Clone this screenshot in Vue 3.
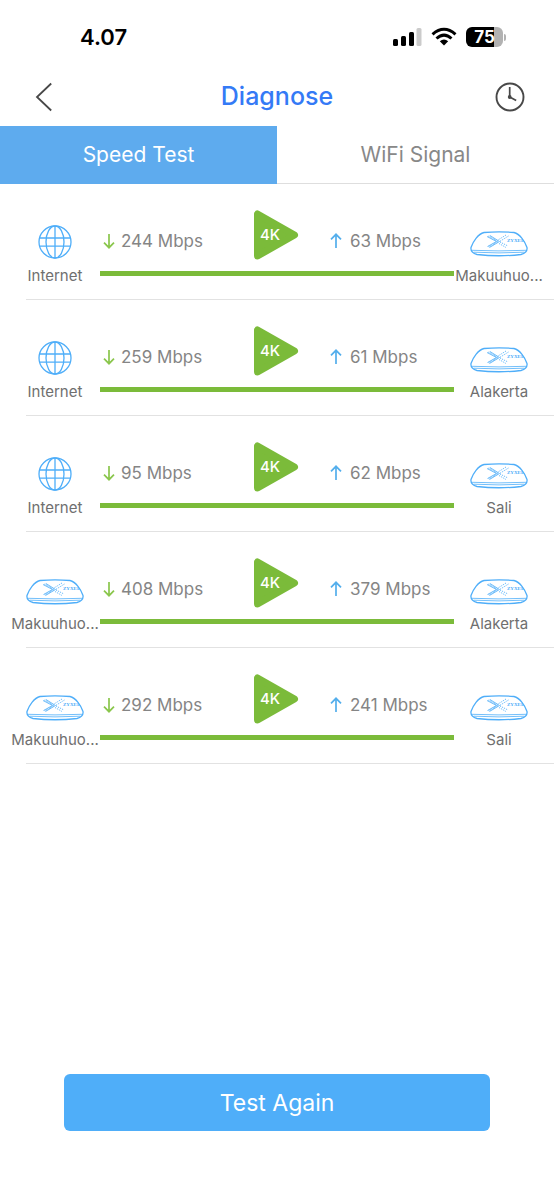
<script setup>
import { ref } from 'vue'

const tabs = ['Speed Test', 'WiFi Signal']
const active = ref('Speed Test')

const rows = [
  { from: 'Internet', to: 'Makuuhuo...', down: 244, up: 63 },
  { from: 'Internet', to: 'Alakerta', down: 259, up: 61 },
  { from: 'Internet', to: 'Sali', down: 95, up: 62 },
  { from: 'Makuuhuo...', to: 'Alakerta', down: 408, up: 379 },
  { from: 'Makuuhuo...', to: 'Sali', down: 292, up: 241 }
]
</script>

<template>
  <div class="screen">
    <svg class="defs" width="0" height="0" aria-hidden="true">
      <symbol id="globe" viewBox="0 0 34 34">
        <g fill="none" stroke="#4faef9" stroke-width="1.3">
          <circle cx="17" cy="17" r="16" />
          <ellipse cx="17" cy="17" rx="9" ry="16" />
          <path d="M17 1v32M1.600 13h30.800M1.600 21.200h30.800" />
        </g>
      </symbol>
      <symbol id="router" viewBox="0 0 58 26">
        <g fill="none" stroke="#4faef9">
          <path stroke-width="1.3" d="M14 1.500Q29 .3 44 1.500C50 3 55 10.500 57 16.500C57.500 20 55 22.500 51 23.500Q29 26 7 23.500C3 22.500.5 20 1 16.500C3 10.500 8 3 14 1.500Z" />
          <path stroke-width=".8" d="M2 19.300Q29 20.500 56 19.300M3.500 21.200Q29 22.600 54.500 21.200" />
          <path stroke-width=".8" d="M17 5.500L26.500 10.500L17.500 15.500M20 4.500L29.500 10.500L19.500 16.500" />
          <path stroke-width="1.500" stroke-dasharray="1 .6" stroke-opacity=".7" d="M18.500 5L28 10.500L18.500 16" />
          <path stroke-width="1" stroke-dasharray="1.200 1" stroke-opacity=".85" d="M36 4L28 9M38.500 5L30 10.300M30 11L38 15M29 12.500L36 16.500" />
        </g>
      </symbol>
    </svg>

    <header class="status">
      <span class="time">4.07</span>
      <div class="indicators">
        <svg width="30" height="20" viewBox="0 0 30 20" aria-hidden="true">
          <rect x="1" y="12" width="5" height="7" rx="1.500" />
          <rect x="9" y="9" width="5" height="10" rx="1.500" />
          <rect x="17" y="5" width="5" height="14" rx="1.500" />
          <rect x="24.500" y="1" width="5" height="18" rx="1.500" fill="#cbcbcb" />
        </svg>
        <svg width="26" height="20" viewBox="0 0 26 20" aria-hidden="true">
          <g fill="none" stroke="#000" stroke-width="3">
            <path d="M1.500 7.300Q13-2.700 24.500 7.300" />
            <path d="M5.500 11.500Q13 4.800 20.500 11.500" />
          </g>
          <path d="M8.800 14.300Q13 10.900 17.200 14.300L13 18.600Z" />
        </svg>
        <div class="battery">
          <span class="cell">75</span>
          <span class="nub"></span>
        </div>
      </div>
    </header>

    <nav class="bar">
      <button class="icon-button" aria-label="Back">
        <svg width="18" height="30" viewBox="0 0 18 30">
          <path d="M16.200 1.500L2 15l14.200 13.500" fill="none" stroke="#484848" stroke-width="1.800" />
        </svg>
      </button>
      <h1>Diagnose</h1>
      <button class="icon-button" aria-label="History">
        <svg width="30" height="30" viewBox="0 0 30 30">
          <circle cx="15" cy="15" r="13.500" fill="none" stroke="#484848" stroke-width="1.900" />
          <path d="M14.700 5v10l6.500 3.500" fill="none" stroke="#484848" stroke-width="1.700" />
          <circle cx="14.700" cy="15" r="1.900" fill="#484848" />
        </svg>
      </button>
    </nav>

    <div class="tabs" role="tablist">
      <button
        v-for="tab in tabs"
        :key="tab"
        role="tab"
        class="tab"
        :class="{ active: tab === active }"
        :aria-selected="tab === active"
        @click="active = tab"
      >{{ tab }}</button>
    </div>

    <main>
      <ul class="results">
        <li v-for="(row, i) in rows" :key="i" class="result">
          <div class="node">
            <svg v-if="row.from === 'Internet'" class="globe" aria-hidden="true"><use href="#globe" /></svg>
            <svg v-else class="router" viewBox="0 0 58 26" aria-hidden="true">
              <use href="#router" />
              <text x="37" y="11" class="brand">ZYXEL</text>
            </svg>
            <span class="name">{{ row.from }}</span>
          </div>
          <div class="link">
            <div class="speeds">
              <span class="speed down">
                <svg width="12" height="16" viewBox="0 0 12 16" aria-hidden="true">
                  <path d="M6 1v13.500M1 9.700l5 5 5-5" fill="none" stroke="#8ac64c" stroke-width="1.700" />
                </svg>
                {{ row.down }} Mbps
              </span>
              <span class="quality">
                <svg width="46" height="50" viewBox="0 0 46 50" aria-hidden="true">
                  <path d="M3.500 4v42l37-21z" fill="#7bbb3a" stroke="#7bbb3a" stroke-width="7" stroke-linejoin="round" />
                </svg>
                <span class="badge">4K</span>
              </span>
              <span class="speed up">
                <svg width="12" height="16" viewBox="0 0 12 16" aria-hidden="true">
                  <path d="M6 15V1.500M1 6.300l5-5 5 5" fill="none" stroke="#53aeec" stroke-width="1.700" />
                </svg>
                {{ row.up }} Mbps
              </span>
            </div>
            <div class="line"></div>
          </div>
          <div class="node">
            <svg class="router" viewBox="0 0 58 26" aria-hidden="true">
              <use href="#router" />
              <text x="37" y="11" class="brand">ZYXEL</text>
            </svg>
            <span class="name">{{ row.to }}</span>
          </div>
        </li>
      </ul>
    </main>

    <footer>
      <button class="primary">Test Again</button>
    </footer>
  </div>
</template>

<style>
body {
  background: #fff;
}
</style>

<style scoped>
.screen {
  display: flex;
  flex-direction: column;
  min-height: 100vh;
  font-family: Inter, "Liberation Sans", sans-serif;
  color: #7f7f7f;
}
.defs {
  position: absolute;
}
button {
  padding: 0;
  border: 0;
  background: none;
  font: inherit;
  color: inherit;
  cursor: pointer;
}
.status {
  display: flex;
  justify-content: space-between;
  align-items: center;
  height: 32px;
  padding: 21px 48px 15px 80px;
  color: #000;
}
.time {
  font-size: 22px;
  font-weight: 600;
}
.indicators {
  display: flex;
  align-items: center;
  gap: 9px;
}
.battery {
  display: flex;
  align-items: center;
  gap: 1px;
}
.cell {
  width: 37px;
  border-radius: 6px;
  background: linear-gradient(90deg, #000 75%, #b2b2b2 75%);
  color: #fff;
  font-size: 17px;
  font-weight: 700;
  line-height: 20px;
  text-align: center;
}
.nub {
  width: 2px;
  height: 7px;
  border-radius: 0 2px 2px 0;
  background: #b2b2b2;
}
.bar {
  display: grid;
  grid-template-columns: 36px 1fr 36px;
  align-items: center;
  height: 58px;
  padding: 0 26px;
}
.icon-button {
  display: flex;
  justify-content: center;
}
h1 {
  margin: 0;
  padding-bottom: 2px;
  font-size: 25px;
  font-weight: 500;
  line-height: 30px;
  text-align: center;
  color: #347af6;
}
.tabs {
  display: flex;
  height: 58px;
}
.tab {
  flex: 1;
  box-sizing: border-box;
  border-bottom: 1px solid #dedede;
  font-size: 21px;
  color: #888;
}
.tab.active {
  border-color: #5eabee;
  background: #5eabee;
  color: #fff;
}
main {
  flex: 1;
}
.results {
  margin: 0;
  padding: 0;
  list-style: none;
}
.result {
  display: grid;
  grid-template-columns: 90px 1fr 90px;
  box-sizing: border-box;
  height: 116px;
  padding: 0 10px;
  background: linear-gradient(#e2e2e2, #e2e2e2) 26px 100% / 100% 1px no-repeat;
}
.node {
  display: flex;
  flex-direction: column;
  align-items: center;
  padding-top: 41px;
}
.globe {
  width: 34px;
  height: 34px;
}
.router {
  width: 58px;
  height: 26px;
  margin: 6px 0 2px;
}
.brand {
  font-family: "Liberation Serif", serif;
  font-size: 5px;
  font-weight: 700;
  fill: #4faef9;
}
.name {
  margin-top: 7px;
  font-size: 15px;
  line-height: 20px;
  white-space: nowrap;
  color: #6f6f6f;
}
.speeds {
  display: grid;
  grid-template-columns: 1fr 46px 1fr;
  height: 61px;
  padding-top: 26px;
}
.speed {
  display: flex;
  align-items: center;
  gap: 6px;
  height: 62px;
  font-size: 17px;
  white-space: nowrap;
  color: #858585;
}
.down {
  padding-left: 3px;
}
.up {
  gap: 8px;
  padding-left: 30px;
}
.quality {
  position: relative;
  height: 50px;
}
.badge {
  position: absolute;
  top: 15px;
  left: 6px;
  font-size: 15px;
  font-weight: 500;
  line-height: 20px;
  color: #fff;
}
.line {
  height: 5px;
  background: #7bbb3a;
}
footer {
  padding: 0 64px 69px;
}
.primary {
  width: 100%;
  height: 57px;
  border-radius: 6px;
  background: #4faef9;
  font-size: 23px;
  color: #fff;
}
</style>
